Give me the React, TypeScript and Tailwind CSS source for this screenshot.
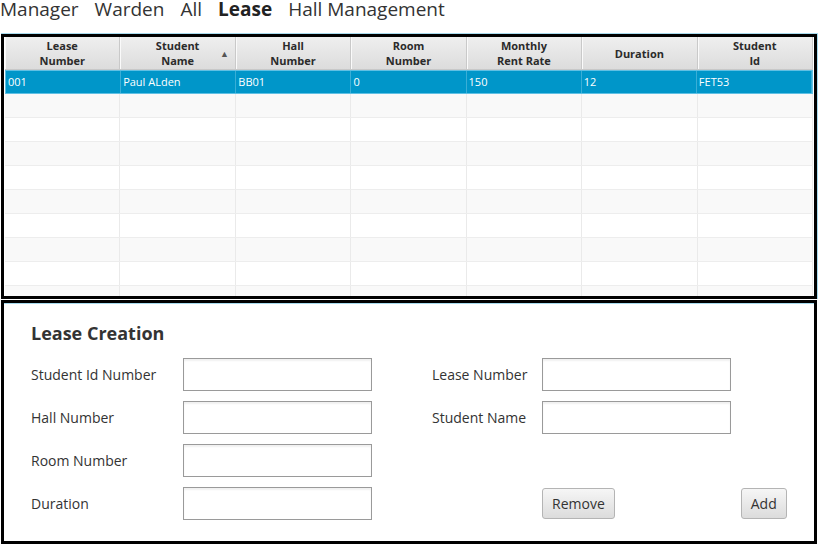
const tabs = ['Manager', 'Warden', 'All', 'Lease', 'Hall Management']

const columns = [
  ['Lease', 'Number'],
  ['Student', 'Name'],
  ['Hall', 'Number'],
  ['Room', 'Number'],
  ['Monthly', 'Rent Rate'],
  ['Duration'],
  ['Student', 'Id'],
]

const selected = ['001', 'Paul ALden', 'BB01', '0', '150', '12', 'FET53']

const emptyRows = 9

function Field({ label, labelWidth }: { label: string; labelWidth: string }) {
  return (
    <div className="flex h-[33px] items-center">
      <span className={`${labelWidth} shrink-0 text-[14px] text-[#333]`}>{label}</span>
      <input
        className="h-[33px] w-[189px] border border-[#9a9a9a] bg-white px-2 text-[14px] shadow-[inset_0_2px_2px_rgba(0,0,0,0.06)] outline-none"
        type="text"
      />
    </div>
  )
}

function FxButton({ children }: { children: string }) {
  return (
    <button className="h-[31px] rounded-[3px] border border-[#b4b4b4] bg-gradient-to-b from-[#f6f6f6] to-[#dcdcdc] px-[9px] text-[14px] text-[#333]">
      {children}
    </button>
  )
}

export default function App() {
  return (
    <div className="h-[557px] w-[824px] overflow-hidden bg-white font-['Open_Sans',sans-serif]">
      {/* tab strip */}
      <div className="flex h-[33px] gap-[16px] text-[19px] leading-[19px] text-[#333]">
        {tabs.map((t) => (
          <span key={t} className={t === 'Lease' ? 'font-bold text-[#222]' : ''}>
            {t}
          </span>
        ))}
      </div>

      {/* lease table */}
      <div className="ml-[1px] w-[817px] border-t border-r border-[#a8dbee]">
        <div className="h-[265px] border-[3px] border-black bg-white px-[1px]">
          <div className="h-full overflow-hidden">
            <div className="grid h-[33px] grid-cols-7 border-b border-[#c8c8c8] bg-gradient-to-b from-[#efefef] to-[#dcdcdc]">
              {columns.map((lines, i) => (
                <div
                  key={i}
                  className="relative flex flex-col items-center justify-center border-r border-[#c9c9c9] text-[11px] leading-[15px] font-bold text-[#2b2b2b] shadow-[inset_1px_0_0_#fafafa]"
                >
                  {lines.map((l) => (
                    <span key={l}>{l}</span>
                  ))}
                  {i === 1 && (
                    <span className="absolute top-[12px] right-[6px] text-[9px] leading-none text-[#555]">▲</span>
                  )}
                </div>
              ))}
            </div>
            <div className="grid h-[24px] grid-cols-7 border border-[#5fc0e4] bg-[#0096c9]">
              {selected.map((v, i) => (
                <div key={i} className="flex items-center border-r border-[#3aaed6] pl-[2px] text-[11px] text-white">
                  {v}
                </div>
              ))}
            </div>
            {Array.from({ length: emptyRows }).map((_, r) => (
              <div
                key={r}
                className={`grid h-[24px] grid-cols-7 border-b border-[#ededed] ${r % 2 === 0 ? 'bg-[#f9f9f9]' : 'bg-white'}`}
              >
                {columns.map((_, i) => (
                  <div key={i} className="border-r border-[#eaeaea]" />
                ))}
              </div>
            ))}
          </div>
        </div>
      </div>

      {/* creation form */}
      <div className="mt-[1px] ml-[1px] h-[244px] w-[816px] border-[3px] border-black bg-white">
        <div className="border-t border-[#a8dbee] pt-[17px] pl-[27px]">
          <h2 className="text-[18px] leading-[24px] font-bold text-[#333]">Lease Creation</h2>
          <div className="mt-[13px] flex">
            <div className="flex flex-col gap-[10px]">
              <Field label="Student Id Number" labelWidth="w-[152px]" />
              <Field label="Hall Number" labelWidth="w-[152px]" />
              <Field label="Room Number" labelWidth="w-[152px]" />
              <Field label="Duration" labelWidth="w-[152px]" />
            </div>
            <div className="ml-[60px] flex flex-col gap-[10px]">
              <Field label="Lease Number" labelWidth="w-[110px]" />
              <Field label="Student Name" labelWidth="w-[110px]" />
              <div className="h-[33px]" />
              <div className="flex h-[33px] items-center pl-[110px]">
                <FxButton>Remove</FxButton>
                <div className="ml-[126px]">
                  <FxButton>Add</FxButton>
                </div>
              </div>
            </div>
          </div>
        </div>
      </div>
    </div>
  )
}
